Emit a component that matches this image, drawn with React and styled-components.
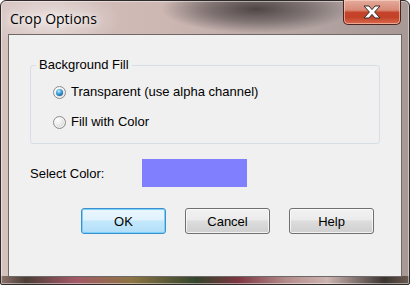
import React from 'react';
import styled, { createGlobalStyle } from 'styled-components';

const Global = createGlobalStyle`
  html, body { margin: 0; padding: 0; background: #ffffff; }
  body { font-family: "Liberation Sans", Arial, sans-serif; }
  #root { width: 410px; height: 285px; }
`;

const Window = styled.div`
  box-sizing: border-box;
  width: 410px;
  height: 285px;
  display: flex;
  flex-direction: column;
  border: 1px solid #2f2929;
  border-radius: 6px 6px 2px 2px;
  padding: 0 7px 7px;
  background:
    linear-gradient(to right, #8c726c 0%, #4c3e36 6%, #a25866 18%, #8c7444 32%, #34442c 48%, #7c3640 58%, #b48c8a 70%, #ccb4b0 80%, #3a3430 94%, #6a5a50 100%) bottom / 100% 8px no-repeat,
    radial-gradient(ellipse 95px 24px at 255px 8px, rgba(72, 64, 64, 0.95) 0%, rgba(90, 82, 82, 0.6) 55%, rgba(90, 82, 82, 0) 100%),
    radial-gradient(ellipse 70px 30px at 50px 18px, rgba(236, 226, 224, 0.9) 0%, rgba(236, 226, 224, 0) 100%),
    linear-gradient(to right, #d4c2bf 0%, #cdb7b3 40%, #b0a2a0 80%, #a89896 100%);
  box-shadow: inset 0 0 0 1px rgba(255, 255, 255, 0.45);
`;

const TitleBar = styled.div`
  height: 33px;
  display: flex;
  align-items: flex-start;
  margin: 0 1px 0 2px;
`;

const Title = styled.div`
  font-family: "Open Sans", "Noto Sans", sans-serif;
  font-size: 14px;
  color: #000;
  margin-top: 8px;
  text-shadow: 0 0 6px rgba(255, 255, 255, 0.95), 0 0 10px rgba(255, 255, 255, 0.8);
`;

const CloseButton = styled.div`
  margin-left: auto;
  margin-top: -1px;
  width: 58px;
  height: 25px;
  box-sizing: border-box;
  display: flex;
  align-items: center;
  justify-content: center;
  border: 1px solid #4a2420;
  border-top: none;
  border-radius: 0 0 5px 5px;
  background: linear-gradient(#e4ac9c 0%, #d88a76 42%, #c5432a 52%, #c24228 72%, #da6a4c 100%);
  box-shadow: inset 0 0 0 1px rgba(255, 220, 210, 0.55);
`;

const Client = styled.div`
  flex: 1;
  display: flex;
  flex-direction: column;
  background: #f0f0f0;
  border: 1px solid #6e6868;
  padding: 22px 0 0 21px;
  font-size: 13px;
  color: #000;
`;

const Group = styled.fieldset`
  box-sizing: border-box;
  width: 350px;
  margin: 0;
  padding: 11px 0 13px 0;
  border: 1px solid #d5dfe5;
  border-radius: 3px;
`;

const Legend = styled.legend`
  margin-left: 5px;
  padding: 0 3px;
  line-height: 16px;
  height: 16px;
`;

const RadioList = styled.div`
  display: flex;
  flex-direction: column;
  gap: 14px;
  padding-left: 22px;
`;

const RadioRow = styled.label`
  display: flex;
  align-items: center;
  gap: 5px;
  height: 16px;
  line-height: 16px;
`;

const RadioCircle = styled.span`
  box-sizing: border-box;
  width: 13px;
  height: 13px;
  border-radius: 50%;
  border: 1px solid #8c8c8c;
  background: radial-gradient(circle at 35% 30%, #ffffff 0%, #ececec 40%, #cacaca 100%);
  box-shadow: inset 0 0 0 1px rgba(255, 255, 255, 0.6);
  display: flex;
  align-items: center;
  justify-content: center;
  flex: none;
`;

const RadioDot = styled.span`
  width: 7px;
  height: 7px;
  border-radius: 50%;
  background: radial-gradient(circle at 40% 32%, #c6f0ff 0%, #49aee6 35%, #1d6aa6 72%, #0d3d68 100%);
`;

const ColorRow = styled.div`
  display: flex;
  align-items: center;
  margin-top: 15px;
  height: 28px;
`;

const ColorLabel = styled.span`
  width: 112px;
`;

const Swatch = styled.div`
  width: 105px;
  height: 28px;
  background: ${(p) => p.$color};
`;

const ButtonRow = styled.div`
  display: flex;
  gap: 19px;
  margin: 21px 0 0 51px;
`;

const Button = styled.button`
  box-sizing: border-box;
  width: 85px;
  height: 26px;
  font-family: "Liberation Sans", Arial, sans-serif;
  font-size: 13px;
  color: #000;
  border-radius: 3px;
  padding: 0;
  border: 1px solid ${(p) => (p.$default ? '#3c8fd0' : '#707070')};
  background: ${(p) =>
    p.$default
      ? 'linear-gradient(#eaf6fd 0%, #e0f2fd 45%, #c4e8fc 50%, #b2def8 100%)'
      : 'linear-gradient(#f2f2f2 0%, #ebebeb 45%, #dddddd 50%, #cfcfcf 100%)'};
  box-shadow: ${(p) =>
    p.$default ? 'inset 0 0 0 1px #7cd2f6' : 'inset 0 0 0 1px rgba(255,255,255,0.7)'};
`;

function Radio({ checked, children }) {
  return (
    <RadioRow>
      <RadioCircle>{checked && <RadioDot />}</RadioCircle>
      <span>{children}</span>
    </RadioRow>
  );
}

export default function App() {
  return (
    <>
      <Global />
      <Window>
        <TitleBar>
          <Title>Crop Options</Title>
          <CloseButton>
            <svg width="18" height="14" viewBox="0 0 18 14">
              <path
                d="M1 1 H6 L9 4.6 L12 1 H17 L11.6 7 L17 13 H12 L9 9.4 L6 13 H1 L6.4 7 Z"
                fill="#ffffff"
                stroke="#3a2a2a"
                strokeWidth="1"
                strokeLinejoin="round"
              />
            </svg>
          </CloseButton>
        </TitleBar>
        <Client>
          <Group>
            <Legend>Background Fill</Legend>
            <RadioList>
              <Radio checked>Transparent (use alpha channel)</Radio>
              <Radio>Fill with Color</Radio>
            </RadioList>
          </Group>
          <ColorRow>
            <ColorLabel>Select Color:</ColorLabel>
            <Swatch $color="#8080ff" />
          </ColorRow>
          <ButtonRow>
            <Button $default>OK</Button>
            <Button>Cancel</Button>
            <Button>Help</Button>
          </ButtonRow>
        </Client>
      </Window>
    </>
  );
}
